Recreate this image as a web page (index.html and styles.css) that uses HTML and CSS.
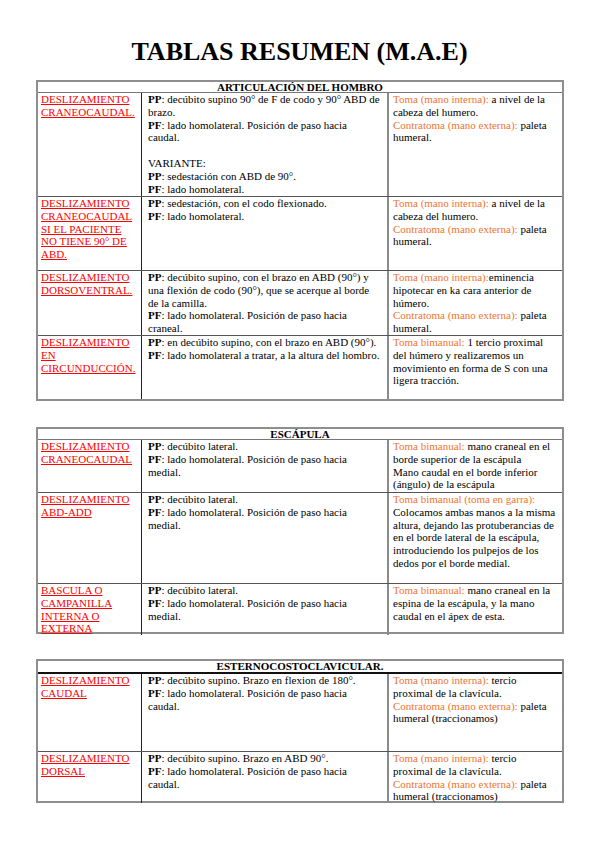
FILE: index.html
```html
<!DOCTYPE html>
<html lang="es">
<head>
<meta charset="utf-8">
<title>TABLAS RESUMEN (M.A.E)</title>
<link rel="stylesheet" href="styles.css">
</head>
<body>
<main class="page">
  <h1 class="title">TABLAS RESUMEN (M.A.E)</h1>

  <section class="tbl t1">
    <div class="head">ARTICULACIÓN DEL HOMBRO</div>
    <div class="row first h103">
      <div class="cell name"><span class="lnk">DESLIZAMIENTO CRANEOCAUDAL.</span></div>
      <div class="cell pos"><b>PP</b>: decúbito supino 90° de F de codo y 90° ABD de brazo.<br><b>PF</b>: lado homolateral. Posición de paso hacia caudal.<br><br>VARIANTE:<br><b>PP</b>: sedestación con ABD de 90°.<br><b>PF</b>: lado homolateral.</div>
      <div class="cell toma"><span class="or">Toma (mano interna):</span> a nivel de la cabeza del humero.<br><span class="or">Contratoma (mano externa):</span> paleta humeral.</div>
    </div>
    <div class="row h74">
      <div class="cell name"><span class="lnk">DESLIZAMIENTO CRANEOCAUDAL SI EL PACIENTE NO TIENE 90° DE ABD.</span></div>
      <div class="cell pos"><b>PP</b>: sedestación, con el codo flexionado.<br><b>PF</b>: lado homolateral.</div>
      <div class="cell toma"><span class="or">Toma (mano interna):</span> a nivel de la cabeza del humero.<br><span class="or">Contratoma (mano externa):</span> paleta humeral.</div>
    </div>
    <div class="row h65">
      <div class="cell name"><span class="lnk">DESLIZAMIENTO DORSOVENTRAL.</span></div>
      <div class="cell pos"><b>PP</b>: decúbito supino, con el brazo en ABD (90°) y una flexión de codo (90°), que se acerque al borde de la camilla.<br><b>PF</b>: lado homolateral. Posición de paso hacia craneal.</div>
      <div class="cell toma"><span class="or">Toma (mano interna):</span>eminencia hipotecar en ka cara anterior de húmero.<br><span class="or">Contratoma (mano externa):</span> paleta humeral.</div>
    </div>
    <div class="row h64">
      <div class="cell name"><span class="lnk">DESLIZAMIENTO EN CIRCUNDUCCIÓN.</span></div>
      <div class="cell pos"><b>PP</b>: en decúbito supino, con el brazo en ABD (90°).<br><b>PF</b>: lado homolateral a tratar, a la altura del hombro.</div>
      <div class="cell toma"><span class="or">Toma bimanual:</span> 1 tercio proximal del húmero y realizaremos un movimiento en forma de S con una ligera tracción.</div>
    </div>
  </section>

  <section class="tbl t2">
    <div class="head">ESCÁPULA</div>
    <div class="row first h52">
      <div class="cell name"><span class="lnk">DESLIZAMIENTO CRANEOCAUDAL</span></div>
      <div class="cell pos"><b>PP</b>: decúbito lateral.<br><b>PF</b>: lado homolateral. Posición de paso hacia medial.</div>
      <div class="cell toma"><span class="or">Toma bimanual:</span> mano craneal en el borde superior de la escápula<br>Mano caudal en el borde inferior (ángulo) de la escápula</div>
    </div>
    <div class="row h91">
      <div class="cell name"><span class="lnk">DESLIZAMIENTO ABD-ADD</span></div>
      <div class="cell pos"><b>PP</b>: decúbito lateral.<br><b>PF</b>: lado homolateral. Posición de paso hacia medial.</div>
      <div class="cell toma"><span class="or">Toma bimanual (toma en garra):</span><br>Colocamos ambas manos a la misma altura, dejando las protuberancias de en el borde lateral de la escápula, introduciendo los pulpejos de los dedos por el borde medial.</div>
    </div>
    <div class="row h49">
      <div class="cell name"><span class="lnk">BASCULA O CAMPANILLA INTERNA O EXTERNA</span></div>
      <div class="cell pos"><b>PP</b>: decúbito lateral.<br><b>PF</b>: lado homolateral. Posición de paso hacia medial.</div>
      <div class="cell toma"><span class="or">Toma bimanual:</span> mano craneal en la espina de la escápula, y la mano caudal en el ápex de esta.</div>
    </div>
  </section>

  <section class="tbl t3">
    <div class="head">ESTERNOCOSTOCLAVICULAR.</div>
    <div class="row first h77">
      <div class="cell name"><span class="lnk">DESLIZAMIENTO CAUDAL</span></div>
      <div class="cell pos"><b>PP</b>: decúbito supino. Brazo en flexion de 180°.<br><b>PF</b>: lado homolateral. Posición de paso hacia caudal.</div>
      <div class="cell toma"><span class="or">Toma (mano interna):</span> tercio<br>proximal de la clavícula.<br><span class="or">Contratoma (mano externa):</span> paleta humeral (traccionamos)</div>
    </div>
    <div class="row h50">
      <div class="cell name"><span class="lnk">DESLIZAMIENTO DORSAL</span></div>
      <div class="cell pos"><b>PP</b>: decúbito supino. Brazo en ABD 90°.<br><b>PF</b>: lado homolateral. Posición de paso hacia caudal.</div>
      <div class="cell toma"><span class="or">Toma (mano interna):</span> tercio<br>proximal de la clavícula.<br><span class="or">Contratoma (mano externa):</span> paleta humeral (traccionamos)</div>
    </div>
  </section>
</main>
</body>
</html>
```

FILE: styles.css
```css
html, body {
  margin: 0;
  padding: 0;
  background: #ffffff;
}

body {
  font-family: "Liberation Serif", "Times New Roman", serif;
  color: #000;
}

.page {
  width: 599px;
  padding-top: 37px;
  display: flex;
  flex-direction: column;
  align-items: center;
}

.title {
  margin: 0 0 13px 0;
  font-size: 26px;
  line-height: 30px;
  font-weight: bold;
  text-align: center;
}

.tbl {
  box-sizing: border-box;
  width: 528px;
  margin-left: 1px;
  border: 2px solid #8e8e8e;
  font-size: 11px;
  line-height: 12.8px;
}

.t1 { margin-bottom: 26px; }
.t2 { margin-bottom: 25px; }

.head {
  height: 11px;
  box-sizing: border-box;
  font-weight: bold;
  text-align: center;
  line-height: 10px;
  border-bottom: 1px solid #777;
}

.t3 .head {
  height: 13px;
  line-height: 11px;
  border-bottom: 2px solid #111;
}

.row {
  box-sizing: border-box;
  display: grid;
  grid-template-columns: 104px 247px 1fr;
  border-top: 1px solid #555;
}

.row.first {
  border-top: none;
}

.cell {
  min-width: 0;
}

.name {
  padding: 0 2px 0 3px;
  border-right: 1px solid #222;
}

.pos {
  padding: 0 6px 0 6px;
  border-right: 2px solid #8a8a8a;
}

.toma {
  padding: 0 3px 0 4px;
}

.lnk {
  color: #ff0000;
  text-decoration: underline;
  text-decoration-color: #ff0000;
  text-underline-offset: 1px;
}

.or {
  color: #f07432;
}

.h103 { height: 103px; }
.h74 { height: 74px; }
.h65 { height: 65px; }
.h64 { height: 64px; }
.h52 { height: 52px; }
.h91 { height: 91px; }
.h49 { height: 49px; }
.h77 { height: 77px; }
.h50 { height: 50px; }
```
